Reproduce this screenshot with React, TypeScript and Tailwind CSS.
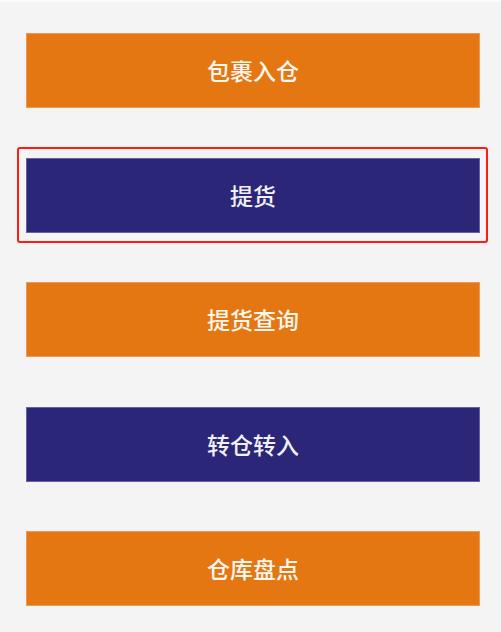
const items = [
  { label: "包裹入仓", tone: "orange" },
  { label: "提货", tone: "navy", selected: true },
  { label: "提货查询", tone: "orange" },
  { label: "转仓转入", tone: "navy" },
  { label: "仓库盘点", tone: "orange" },
];

export default function App() {
  return (
    <div
      className="w-[501px] h-[632px] bg-[#f4f4f4] border-t-2 border-[#fafafa] overflow-hidden"
      style={{ fontFamily: '"Noto Sans CJK SC", "Noto Sans", sans-serif' }}
    >
      <div className="flex flex-col gap-[49.5px] pl-[26px] pr-[21px] pt-[31px]">
        {items.map((item) => (
          <div key={item.label} className="relative">
            {item.selected && (
              <div className="absolute -left-[9px] -top-[11px] -right-[8px] -bottom-[10px] border-2 border-[#ff1a12] rounded-[3px]" />
            )}
            <button
              className={
                item.tone === "orange"
                  ? "w-full h-[75px] flex items-center justify-center bg-[#e47712] border border-[#eb9a55] text-[23px] font-medium text-[#fdf6ee]"
                  : "w-full h-[75px] flex items-center justify-center bg-[#2c2678] border border-[#6660a4] text-[23px] font-medium text-[#f1f0f7]"
              }
            >
              {item.label}
            </button>
          </div>
        ))}
      </div>
    </div>
  );
}
